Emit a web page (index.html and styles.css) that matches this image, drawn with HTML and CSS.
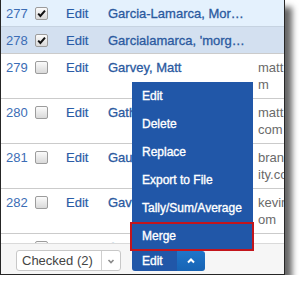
FILE: index.html
```html
<!DOCTYPE html>
<html lang="en">
<head>
    <meta charset="UTF-8">
    <title>Records - Edit menu</title>
    <link rel="stylesheet" href="styles.css">
</head>
<body>
    <div class="shot">
        <div class="rows">
            <div class="row hi1">
                <span class="num">277</span>
                <span class="cb on"><svg viewBox="0 0 11 11"><path d="M2.2 5.6 L4.4 8 L9 2.6"/></svg></span>
                <span class="edit">Edit</span>
                <span class="name">Garcia-Lamarca, Morgan</span>
                <span class="mail"></span>
            </div>
            <div class="row hi2">
                <span class="num">278</span>
                <span class="cb on"><svg viewBox="0 0 11 11"><path d="M2.2 5.6 L4.4 8 L9 2.6"/></svg></span>
                <span class="edit">Edit</span>
                <span class="name">Garcialamarca, 'morgan'</span>
                <span class="mail"></span>
            </div>
            <div class="row tall">
                <span class="num">279</span>
                <span class="cb"></span>
                <span class="edit">Edit</span>
                <span class="name">Garvey, Matt</span>
                <span class="mail">matt.garvey@example.co<br>m</span>
            </div>
            <div class="row tall">
                <span class="num">280</span>
                <span class="cb"></span>
                <span class="edit">Edit</span>
                <span class="name">Gathers, Lena</span>
                <span class="mail">matt.gathers@example.<br>com</span>
            </div>
            <div class="row tall">
                <span class="num">281</span>
                <span class="cb"></span>
                <span class="edit">Edit</span>
                <span class="name">Gauthier, Brandon</span>
                <span class="mail">brandon.gauthier@univers<br>ity.com</span>
            </div>
            <div class="row tall">
                <span class="num">282</span>
                <span class="cb"></span>
                <span class="edit">Edit</span>
                <span class="name">Gavin, Kevin</span>
                <span class="mail">kevin.gavin@example.c<br>om</span>
            </div>
            <div class="row tall">
                <span class="num">283</span>
                <span class="cb"></span>
                <span class="edit">Edit</span>
                <span class="name">Gay, Simone</span>
                <span class="mail">simone.gay@example.co<br>m</span>
            </div>
        </div>

        <div class="toolbar">
            <div class="select">
                <span class="label">Checked (2)</span>
                <span class="arrow"><svg viewBox="0 0 10 10"><path d="M2.5 4 L5 6.5 L7.5 4"/></svg></span>
            </div>
            <div class="split">
                <span class="btn">Edit</span>
                <span class="caret"><svg viewBox="0 0 10 10"><path d="M2 6.5 L5 3.5 L8 6.5"/></svg></span>
            </div>
        </div>

        <ul class="menu">
            <li>Edit</li>
            <li>Delete</li>
            <li>Replace</li>
            <li>Export to File</li>
            <li>Tally/Sum/Average</li>
            <li class="marked">Merge</li>
        </ul>
    </div>
</body>
</html>
```

FILE: styles.css
```css
body {
    margin: 0;
    background: #fff;
    font-family: "Liberation Sans", Arial, sans-serif;
    font-size: 13px;
}

.shot {
    position: relative;
    width: 283px;
    height: 274px;
    border: 1px solid #262626;
    border-top: 0;
    overflow: hidden;
    background: #fff;
    box-shadow: 7px 7px 6px rgba(0, 0, 0, 0.6);
}

.row {
    display: grid;
    grid-template-columns: 34px 31px 42px 150px 1fr;
    padding: 5px 0 4px;
    line-height: 17px;
    border-bottom: 1px solid #cbcbcb;
    white-space: nowrap;
}

.row.tall {
    padding-bottom: 5px;
}

.row.hi1 {
    background: #e4f1fd;
    border-bottom-color: #c6d3e1;
}

.row.hi2 {
    background: #d3e0f0;
}

.num {
    padding-left: 5px;
    color: #3b6db5;
}

.cb {
    width: 11px;
    height: 11px;
    margin-top: 2px;
    border: 1px solid #9c9c9c;
    border-radius: 2px;
    background: linear-gradient(#fbfbfb, #d9d9d9);
}

.cb svg {
    display: block;
    width: 11px;
    height: 11px;
}

.cb svg path {
    fill: none;
    stroke: #111;
    stroke-width: 2;
}

.edit {
    color: #2a5ca6;
    -webkit-text-stroke: 0.2px #2a5ca6;
}

.name {
    color: #2b5a9f;
    -webkit-text-stroke: 0.3px #2b5a9f;
    overflow: hidden;
    text-overflow: ellipsis;
    padding-right: 12px;
}

.mail {
    color: #6a6a6a;
}

.menu {
    position: absolute;
    z-index: 2;
    left: 131px;
    top: 82px;
    width: 121px;
    margin: 0;
    padding: 0;
    list-style: none;
    background: #2157a8;
}

.menu li {
    position: relative;
    height: 28px;
    line-height: 28px;
    padding-left: 10px;
    color: #fff;
    font-size: 12px;
    -webkit-text-stroke: 0.35px #fff;
}

.menu li.marked::after {
    content: "";
    position: absolute;
    top: 0;
    bottom: -1px;
    left: -2px;
    right: -1px;
    border: 2px solid #c3151c;
}

.toolbar {
    position: absolute;
    z-index: 1;
    left: 0;
    right: 0;
    bottom: 0;
    height: 24px;
    padding-top: 6px;
    display: flex;
    align-items: flex-start;
    background: #f6f6f6;
    border-top: 1px solid #dadada;
}

.select {
    display: flex;
    width: 103px;
    height: 19px;
    margin-left: 15px;
    border: 1px solid #c8c8c8;
    border-radius: 3px;
    background: #fff;
}

.select .label {
    flex: 1;
    padding-left: 5px;
    line-height: 19px;
    color: #444;
}

.select .arrow {
    width: 18px;
    border-left: 1px solid #cfcfcf;
    display: flex;
    align-items: center;
    justify-content: center;
}

.arrow svg,
.caret svg {
    width: 10px;
    height: 10px;
}

.arrow svg path {
    fill: none;
    stroke: #8a8a8a;
    stroke-width: 1.6;
}

.split {
    display: flex;
    margin-left: 11px;
    margin-top: 1px;
    height: 20px;
}

.split .btn {
    width: 45px;
    box-sizing: border-box;
    padding-left: 10px;
    line-height: 20px;
    font-size: 12px;
    color: #fff;
    -webkit-text-stroke: 0.35px #fff;
    background: #2157a8;
    border-radius: 0 0 0 3px;
}

.split .caret {
    width: 28px;
    display: flex;
    align-items: center;
    justify-content: center;
    background: linear-gradient(#1f75c9, #1864b4);
    border-radius: 0 3px 3px 0;
}

.caret svg path {
    fill: none;
    stroke: #fff;
    stroke-width: 2;
}
```
